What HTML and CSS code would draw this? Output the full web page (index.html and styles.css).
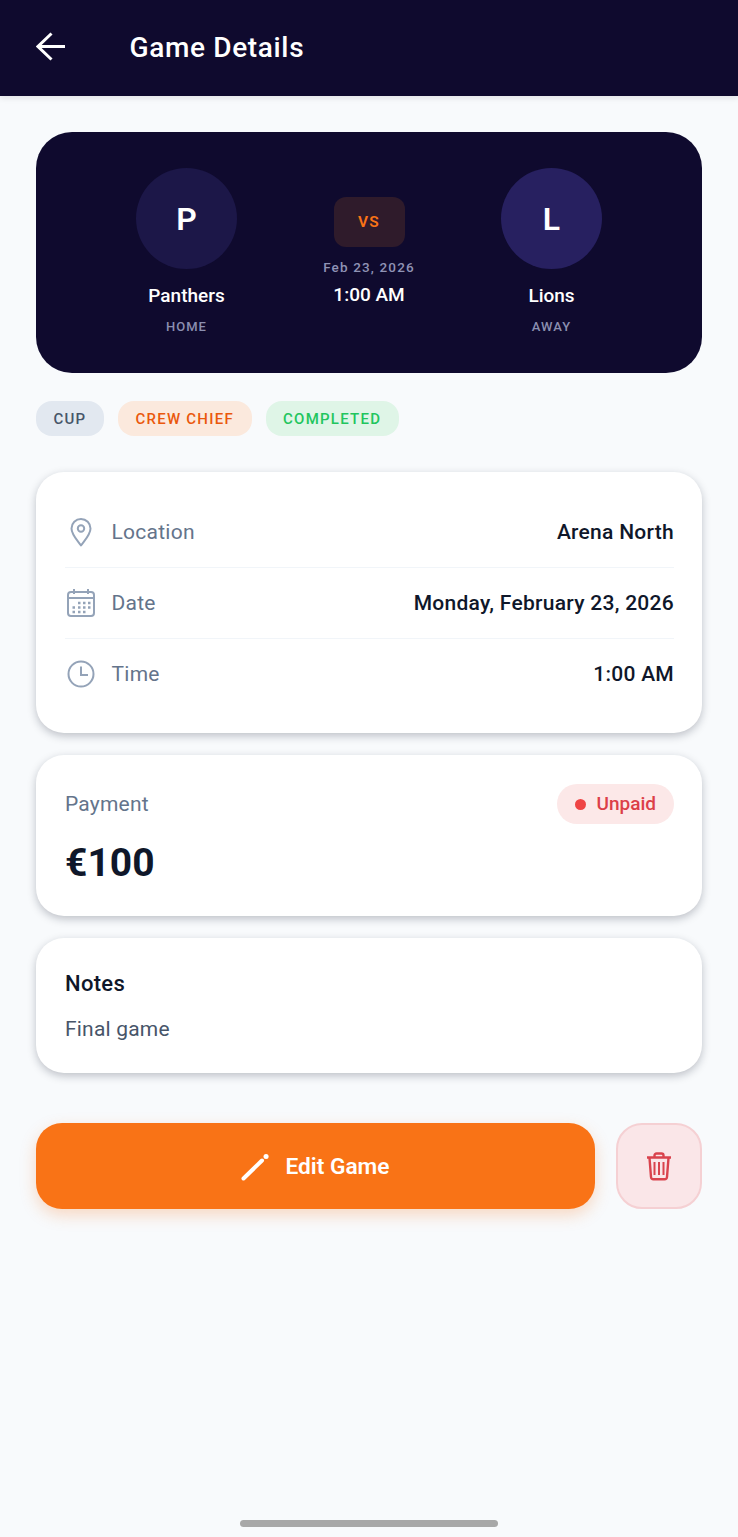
FILE: index.html
```html
<!DOCTYPE html>
<html lang="en">
<head>
<meta charset="UTF-8" />
<meta name="viewport" content="width=device-width, initial-scale=1" />
<title>Game Details</title>
<link rel="stylesheet" href="styles.css">
</head>
<body>

<header class="topbar">
  <svg class="back-icon" viewBox="0 0 30 30" width="30" height="30" fill="none" stroke="#fff" stroke-width="3">
    <path d="M29 14.500H2M15.500 1.500 2 14.500l13.500 13" />
  </svg>
  <div class="topbar-title">Game Details</div>
</header>

<main class="content">
  <section class="matchup">
    <div class="team">
      <div class="avatar avatar-home">P</div>
      <div class="team-name">Panthers</div>
      <div class="team-side">HOME</div>
    </div>
    <div class="match-center">
      <div class="vs-box">VS</div>
      <div class="match-date">Feb 23, 2026</div>
      <div class="match-time">1:00 AM</div>
    </div>
    <div class="team">
      <div class="avatar avatar-away">L</div>
      <div class="team-name">Lions</div>
      <div class="team-side">AWAY</div>
    </div>
  </section>

  <div class="chips">
    <span class="chip chip-slate">CUP</span>
    <span class="chip chip-orange">CREW CHIEF</span>
    <span class="chip chip-green">COMPLETED</span>
  </div>

  <section class="card info-card">
    <div class="info-row">
      <svg class="info-icon" viewBox="0 0 30 30" width="30" height="30" fill="none" stroke="#94a3b8" stroke-width="2">
        <path d="M15 28.500C11 23 5.500 17.500 5.500 11.500a9.500 9.500 0 0 1 19 0C24.500 17.500 19 23 15 28.500Z" stroke-linejoin="round" />
        <circle cx="15" cy="11.500" r="3.200" />
      </svg>
      <span class="info-label">Location</span>
      <span class="info-value">Arena North</span>
    </div>
    <div class="info-row">
      <svg class="info-icon" viewBox="0 0 30 30" width="30" height="30" fill="none" stroke="#94a3b8" stroke-width="2">
        <rect x="2" y="4" width="26" height="24" rx="3" />
        <path d="M2 10h26M8 1v5M22 1v5" />
        <path d="M12 15h2.500M17 15h2.500M22 15h2.500M6.500 19.500H9M12 19.500h2.500M17 19.500h2.500M22 19.500h2.500M6.500 24H9M12 24h2.500M17 24h2.500" stroke-width="2.500" />
      </svg>
      <span class="info-label">Date</span>
      <span class="info-value">Monday, February 23, 2026</span>
    </div>
    <div class="info-row">
      <svg class="info-icon" viewBox="0 0 30 30" width="30" height="30" fill="none" stroke="#94a3b8" stroke-width="2">
        <circle cx="15" cy="15" r="12.500" />
        <path d="M15 7.500V16h7" />
      </svg>
      <span class="info-label">Time</span>
      <span class="info-value">1:00 AM</span>
    </div>
  </section>

  <section class="card payment-card">
    <div class="payment-left">
      <div class="payment-label">Payment</div>
      <div class="payment-amount">€100</div>
    </div>
    <div class="status-pill"><span class="status-dot"></span>Unpaid</div>
  </section>

  <section class="card notes-card">
    <div class="notes-title">Notes</div>
    <div class="notes-text">Final game</div>
  </section>

  <div class="actions">
    <button class="edit-btn">
      <svg viewBox="0 0 28 28" width="28" height="28" fill="none" stroke="#fff" stroke-linecap="round">
        <path d="M2.500 25.500 21 7.500" stroke-width="4" />
        <path d="M25 3.500h.1" stroke-width="5" />
      </svg>
      Edit Game
    </button>
    <button class="delete-btn">
      <svg viewBox="0 0 26 30" width="26" height="30" fill="none" stroke="#d9434d" stroke-width="2.400">
        <path d="M1 6.500h24M8.500 6V4.500a2 2 0 0 1 2-2h5a2 2 0 0 1 2 2V6" />
        <path d="M3.500 7l1.500 19a2.500 2.500 0 0 0 2.500 2.300h11a2.500 2.500 0 0 0 2.500-2.300L22.500 7" />
        <path d="M8.500 11v13M13 11v13M17.500 11v13" stroke-width="2" />
      </svg>
    </button>
  </div>
</main>

<div class="home-bar"></div>

</body>
</html>
```

FILE: styles.css
```css
/* Reset */
*, *::before, *::after {
  box-sizing: border-box;
}

body {
  margin: 0;
  height: 1537px;
  overflow: hidden;
  position: relative;
  font-family: 'Roboto', 'Liberation Sans', sans-serif;
  background: #f8fafc;
  color: #0f172a;
}

/* Top bar */
.topbar {
  height: 96px;
  background: #0f0a2e;
  display: flex;
  align-items: center;
  padding-left: 36px;
  box-shadow: 0 2px 6px rgba(15,23,42,0.1);
}

.back-icon {
  margin-right: 63.500px;
  margin-top: -3px;
}

.topbar-title {
  color: #fff;
  font-size: 28px;
  font-weight: 500;
  letter-spacing: 0.65px;
  margin-top: -2px;
}

.content {
  padding: 36px 36px 0;
}

/* Match header */
.matchup {
  height: 241px;
  background: #0f0a2e;
  border-radius: 36px;
  padding: 36px 50px 0;
  display: grid;
  grid-template-columns: 201px 1fr 201px;
}

.team {
  display: flex;
  flex-direction: column;
  align-items: center;
}

.avatar {
  width: 101px;
  height: 101px;
  border-radius: 50%;
  color: #fff;
  font-size: 32px;
  font-weight: 600;
  display: flex;
  align-items: center;
  justify-content: center;
}

.avatar-home {
  background: #1c1748;
}

.avatar-away {
  background: #272060;
}

.team-name {
  color: #fff;
  font-size: 19px;
  font-weight: 500;
  margin-top: 15px;
  line-height: 24px;
}

.team-side {
  color: #8b8fb0;
  font-size: 13px;
  font-weight: 500;
  letter-spacing: 1px;
  margin-top: 11px;
  line-height: 16px;
}

.match-center {
  display: flex;
  flex-direction: column;
  align-items: center;
  padding-top: 29px;
}

.vs-box {
  width: 71px;
  height: 50px;
  border-radius: 12px;
  background: #2f1b2b;
  color: #f97316;
  font-size: 15.500px;
  font-weight: 600;
  letter-spacing: 1.200px;
  display: flex;
  align-items: center;
  justify-content: center;
}

.match-date {
  color: #8f93b5;
  font-size: 13.500px;
  font-weight: 500;
  letter-spacing: 1.150px;
  margin-top: 12px;
  line-height: 16px;
}

.match-time {
  color: #fff;
  font-size: 19px;
  font-weight: 500;
  margin-top: 9px;
  line-height: 22px;
}

/* Chips */
.chips {
  display: flex;
  gap: 14px;
  margin-top: 28px;
}

.chip {
  height: 35px;
  padding: 0 17.500px;
  border-radius: 16px;
  font-size: 15px;
  font-weight: 500;
  letter-spacing: 1.250px;
  display: flex;
  align-items: center;
}

.chip-slate {
  background: #e2e8f0;
  color: #475569;
}

.chip-orange {
  background: #fbe9dd;
  color: #ea580c;
}

.chip-green {
  background: #dff5e7;
  color: #22c55e;
}

/* Cards */
.card {
  background: #fff;
  border-radius: 28px;
  box-shadow: 0 3px 8px rgba(15,23,42,0.25);
  padding: 0 28px 0 29px;
  margin-top: 22px;
}

.info-card {
  margin-top: 36px;
  height: 261px;
  padding-top: 25px;
}

.info-row {
  height: 71px;
  display: flex;
  align-items: center;
  border-bottom: 1.500px solid #f1f5f9;
}

.info-row:last-child {
  border-bottom-color: transparent;
}

.info-icon {
  margin-left: 1px;
  margin-right: 15.500px;
}

.info-label {
  color: #64748b;
  font-size: 21px;
  letter-spacing: 0.25px;
}

.info-value {
  margin-left: auto;
  color: #0f172a;
  font-size: 21px;
  font-weight: 500;
  letter-spacing: 0.28px;
}

.payment-card {
  height: 161px;
  display: flex;
  justify-content: space-between;
  align-items: flex-start;
  padding-top: 29px;
}

.payment-label {
  color: #64748b;
  font-size: 21px;
  letter-spacing: 0.2px;
  line-height: 40px;
}

.payment-amount {
  font-size: 39px;
  font-weight: 700;
  line-height: 48px;
  margin-top: 15px;
}

.status-pill {
  height: 40px;
  padding: 0 18px 2px 18px;
  border-radius: 20px;
  background: #fce8e8;
  color: #dc3f48;
  font-size: 19px;
  font-weight: 500;
  display: flex;
  align-items: center;
  gap: 11px;
}

.status-dot {
  width: 11px;
  height: 11px;
  margin-top: 2px;
  border-radius: 50%;
  background: #ef4444;
}

.notes-card {
  height: 135px;
  padding-top: 31px;
}

.notes-title {
  font-size: 22px;
  font-weight: 500;
  letter-spacing: 0.3px;
  line-height: 30px;
}

.notes-text {
  color: #475569;
  font-size: 21px;
  letter-spacing: 0.2px;
  line-height: 30px;
  margin-top: 15px;
}

/* Buttons */
.actions {
  display: flex;
  gap: 21px;
  margin-top: 50px;
}

.edit-btn {
  flex: 1;
  height: 86px;
  border: none;
  border-radius: 26px;
  background: #f97316;
  color: #fff;
  font-family: inherit;
  font-size: 22.700px;
  font-weight: 600;
  padding: 1px 0 0;
  display: flex;
  align-items: center;
  justify-content: center;
  gap: 16px;
  box-shadow: 0 6px 16px rgba(249,115,22,0.25);
}

.delete-btn {
  width: 86px;
  height: 86px;
  border: 2px solid #f5d0d3;
  border-radius: 26px;
  background: #fae6e8;
  display: flex;
  align-items: center;
  justify-content: center;
}

/* Gesture bar */
.home-bar {
  position: absolute;
  left: 240px;
  bottom: 10px;
  width: 258px;
  height: 7px;
  border-radius: 4px;
  background: #a8a8a8;
}
```
